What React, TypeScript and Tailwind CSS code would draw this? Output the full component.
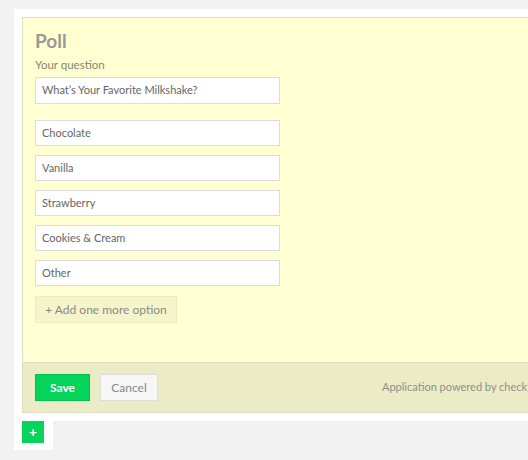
import React from "react";

const options = ["Chocolate", "Vanilla", "Strawberry", "Cookies & Cream", "Other"];

export default function App() {
  return (
    <div
      className="w-[528px] h-[460px] overflow-hidden bg-[#f2f2f2] pt-[9px] pl-[14px]"
      style={{ fontFamily: "Lato, 'Open Sans', sans-serif" }}
    >
      <div className="w-[640px] bg-white px-[8px] pt-[8px] pb-[8px]">
        <div className="border border-[#dedec8] bg-[#ffffd1]">
          <div className="px-[12px] pt-[12px] pb-[39px]">
            <h1 className="text-[19px] leading-[22px] font-bold text-[#999999]">Poll</h1>
            <div className="mt-[6px] text-[11.5px] leading-[14px] text-[#86866c]">Your question</div>
            <div className="mt-[5px] w-[245px] h-[27px] border border-[#dcdcdc] bg-white flex items-center px-[6px] text-[11px] text-[#666666]">
              What’s Your Favorite Milkshake?
            </div>
            <div className="mt-[16px] flex flex-col gap-[9px]">
              {options.map((o) => (
                <div
                  key={o}
                  className="w-[245px] h-[26px] border border-[#dcdcdc] bg-white flex items-center px-[6px] text-[11px] text-[#666666]"
                >
                  {o}
                </div>
              ))}
            </div>
            <div className="mt-[10px] w-[142px] h-[27px] border border-[#ebebc4] bg-[#f5f5cc] flex items-center justify-center text-[12px] text-[#8a8a80]">
              + Add one more option
            </div>
          </div>
          <div className="h-[50px] border-t border-[#dcdcb8] bg-[#ebebc5] flex items-center px-[12px]">
            <div className="w-[55px] h-[27px] bg-[#05d45a] border border-[#04c050] flex items-center justify-center text-[12px] font-bold text-white">
              Save
            </div>
            <div className="ml-[10px] w-[58px] h-[27px] bg-[#f6f6f6] border border-[#dcdcdc] flex items-center justify-center text-[12px] text-[#888888]">
              Cancel
            </div>
            <div className="ml-[224px] text-[11px] text-[#8b9090] whitespace-nowrap">
              Application powered by checkthat.com
            </div>
          </div>
        </div>
      </div>
      <div className="w-[39px] bg-white px-[8px] pb-[7px]">
        <div className="w-[22px] h-[22px] bg-[#05d45a] flex items-center justify-center text-white text-[14px] font-bold leading-none">
          +
        </div>
      </div>
    </div>
  );
}
